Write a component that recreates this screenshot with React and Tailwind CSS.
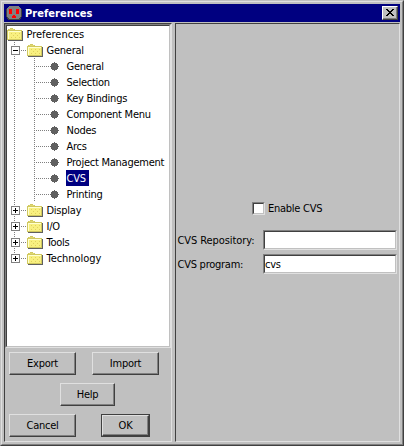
import React from "react";

const tree = [
  { label: "Preferences", depth: 0, wide: true },
  { label: "General", depth: 1, open: true },
  { label: "General", depth: 2 },
  { label: "Selection", depth: 2 },
  { label: "Key Bindings", depth: 2 },
  { label: "Component Menu", depth: 2 },
  { label: "Nodes", depth: 2 },
  { label: "Arcs", depth: 2 },
  { label: "Project Management", depth: 2 },
  { label: "CVS", depth: 2, selected: true },
  { label: "Printing", depth: 2, last: true },
  { label: "Display", depth: 1 },
  { label: "I/O", depth: 1 },
  { label: "Tools", depth: 1 },
  { label: "Technology", depth: 1, last: true, wide: true },
];

const dots = { stroke: "#808080", strokeDasharray: "1 1", fill: "none" };

function Folder({ x }) {
  return (
    <g transform={`translate(${x} 2)`}>
      <path d="M3 0h3v1h2v1h7v10h-15v-10h1v-1h2z" fill="#d0c860" />
      <path d="M2 1h5v1h-5z" fill="#e0d870" />
      <path d="M1 3h13v8h-13z" fill="#f8f080" />
      <path d="M1 3.5h13M1.5 3v8" stroke="#ffffd0" fill="none" />
      <path d="M4 5.5h1M8 5.5h1M12 5.5h1M6 7.5h1M10 7.5h1M4 9.5h1M8 9.5h1M12 9.5h1" stroke="#e0d060" />
      <path d="M15.5 3v10M1 12.5h15" stroke="#606060" fill="none" />
    </g>
  );
}

function Gutter({ node }) {
  const { depth, open, last } = node;
  return (
    <svg
      width={depth * 20 + 18}
      height="16"
      shapeRendering="crispEdges"
      className="block shrink-0"
    >
      {depth === 0 && <Folder x={0} />}
      {depth === 1 && (
        <>
          <path d={last ? "M7.5 0v8" : "M7.5 0v16"} {...dots} />
          <path d="M14 8.5h6" {...dots} />
          <path d="M4.5 4.5h8v8h-8z" fill="#fff" stroke="#808080" />
          <path d={open ? "M6 8.5h5" : "M6 8.5h5M8.5 6v5"} stroke="#000" />
          <Folder x={20} />
        </>
      )}
      {depth === 2 && (
        <>
          <path d={last ? "M7.5 0v16M27.5 0v15M29 8.5h14" : "M7.5 0v16M27.5 0v16M29 8.5h14"} {...dots} />
          <rect x="44" y="6" width="7" height="5" fill="#606060" />
          <rect x="45" y="5" width="5" height="7" fill="#606060" />
          <rect x="43" y="8" width="9" height="1" fill="#606060" />
          <rect x="47" y="4" width="1" height="9" fill="#606060" />
        </>
      )}
    </svg>
  );
}

function Row({ node }) {
  return (
    <div className="flex h-4 items-start">
      <Gutter node={node} />
      <span
        className={
          node.selected
            ? "ml-px h-4 w-[23px] bg-[#000080] pl-[0.5px] leading-[18px] text-white"
            : node.wide
              ? "ml-px h-4 pl-[0.5px] leading-[18px] tracking-[-0.04px]"
              : "ml-px h-4 pl-[0.5px] leading-[18px]"
        }
      >
        {node.label}
      </span>
    </div>
  );
}

const bevel =
  "h-[23px] border border-t-[#e0e0e0] border-l-[#e0e0e0] border-r-[#404040] border-b-[#404040] bg-[#c0c0c0] leading-[21px] tracking-[-0.25px] shadow-[inset_-1px_-1px_0_#808080]";

function Field({ label, value, wide }) {
  return (
    <div className="flex h-5 items-start">
      <span
        className={
          wide
            ? "w-[86px] shrink-0 pl-[0.5px] leading-[22px] tracking-[-0.08px]"
            : "w-[86px] shrink-0 pl-[0.5px] leading-[22px]"
        }
      >
        {label}
      </span>
      <div className="h-5 w-[134px] border border-t-[#808080] border-l-[#808080] border-r-[#e0e0e0] border-b-[#e0e0e0]">
        <div className="h-[18px] border border-t-[#404040] border-l-[#404040] border-r-[#c0c0c0] border-b-[#c0c0c0] bg-white leading-[18px]">
          {value}
        </div>
      </div>
    </div>
  );
}

export default function App() {
  return (
    <div className="h-[446px] w-[404px] border border-t-[#c0c0c0] border-l-[#c0c0c0] border-r-[#404040] border-b-[#404040] bg-[#c0c0c0] font-['DejaVu_Sans_Condensed','DejaVu_Sans',sans-serif] text-[11px] tracking-[-0.25px] whitespace-nowrap text-black">
      <div className="h-[444px] border border-t-[#e0e0e0] border-l-[#e0e0e0] border-r-[#808080] border-b-[#808080] p-0.5">
        <div className="flex h-[18px] items-center bg-[#000080] pr-0.5 pl-0.5">
          <svg width="16" height="16" shapeRendering="crispEdges" className="shrink-0">
            <path d="M3 1h10v1h1v1h1v1h1v8h-1v2h-1v1h-12v-1h-1v-2h-1v-8h1v-1h1v-1h1z" fill="#404040" />
            <path d="M3 1h10v1h1v1h1v9h-1v1h-1v1h-10v-1h-1v-1h-1v-9h1v-1h1z" fill="#808080" />
            <rect x="3" y="4" width="3" height="5" fill="#f00" />
            <rect x="10" y="4" width="3" height="5" fill="#f00" />
            <path d="M7 10h2v1h1v2h-4v-2h1z" fill="#f00" />
          </svg>
          <span className="ml-[3px] h-[18px] grow font-bold leading-[20px] tracking-[0.05px] text-white">
            Preferences
          </span>
          <div className="flex h-[14px] w-4 items-center justify-center border border-t-[#fff] border-l-[#fff] border-r-[#404040] border-b-[#404040] bg-[#c0c0c0] shadow-[inset_-1px_-1px_0_#808080]">
            <svg width="8" height="7" shapeRendering="crispEdges" className="mr-px mb-px">
              <path d="M0 0h2v1h1v1h2v-1h1v-1h2v1h-1v1h-1v1h-1v1h1v1h1v1h1v1h-2v-1h-1v-1h-2v1h-1v1h-2v-1h1v-1h1v-1h1v-1h-1v-1h-1v-1h-1z" />
            </svg>
          </div>
        </div>

        <div className="mt-px flex h-[419px] gap-[3px]">
          <div className="flex w-[168px] shrink-0 flex-col border border-t-[#404040] border-l-[#404040] border-r-[#e0e0e0] border-b-[#e0e0e0]">
            <div className="h-[324px] border border-t-[#808080] border-l-[#808080] border-r-[#e0e0e0] border-b-[#e0e0e0]">
              <div className="h-[322px] border border-t-[#404040] border-l-[#404040] border-r-[#c0c0c0] border-b-[#c0c0c0] bg-white">
                {tree.map((node, i) => (
                  <Row key={i} node={node} />
                ))}
              </div>
            </div>
            <div className="flex flex-col gap-2 pt-1 pl-1">
              <div className="flex gap-4">
                <button className={`${bevel} w-[67px]`}>Export</button>
                <button className={`${bevel} w-[67px]`}>Import</button>
              </div>
              <button className={`${bevel} ml-[51px] w-[55px]`}>Help</button>
              <div className="flex gap-[25px]">
                <button className={`${bevel} w-[67px]`}>Cancel</button>
                <div className="border border-[#404040]">
                  <button className="block h-[21px] w-[47px] border border-t-[#e0e0e0] border-l-[#e0e0e0] border-r-[#404040] border-b-[#404040] leading-[19px] tracking-[-0.25px] shadow-[inset_-1px_-1px_0_#808080]">
                    OK
                  </button>
                </div>
              </div>
            </div>
          </div>

          <div className="flex grow flex-col gap-1 border border-t-[#404040] border-l-[#404040] border-r-[#e0e0e0] border-b-[#e0e0e0] pt-[178px] pl-px">
            <div className="mb-[11px] ml-[75px] flex h-[13px] items-start">
              <div className="size-[13px] border border-t-[#808080] border-l-[#808080] border-r-[#e0e0e0] border-b-[#e0e0e0]">
                <div className="size-[11px] border border-t-[#404040] border-l-[#404040] border-r-[#c0c0c0] border-b-[#c0c0c0] bg-white" />
              </div>
              <span className="ml-[3px] leading-[13px]">Enable CVS</span>
            </div>
            <Field label="CVS Repository:" value="" wide />
            <Field label="CVS program:" value="cvs" />
          </div>
        </div>
      </div>
    </div>
  );
}
